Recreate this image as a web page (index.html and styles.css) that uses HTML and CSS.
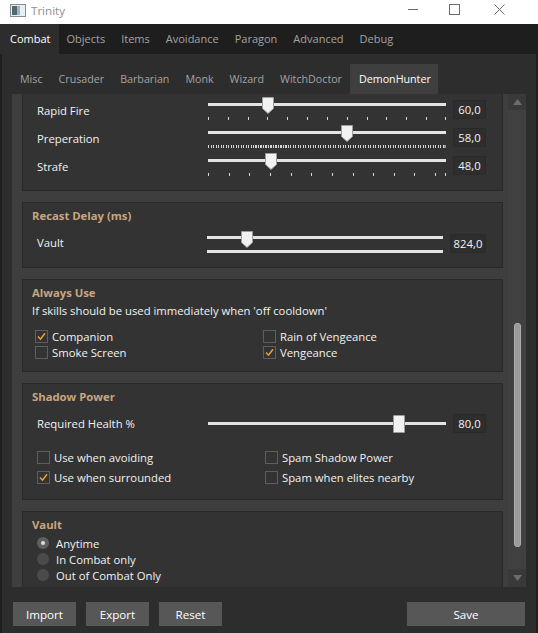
FILE: index.html
```html
<!DOCTYPE html>
<html>
<head>
<meta charset="utf-8">
<title>Trinity</title>
<link rel="stylesheet" href="styles.css">
</head>
<body>
<div class="window">
  <header class="titlebar">
    <svg class="app-icon" width="16" height="13" viewBox="0 0 16 13">
      <rect x="0.5" y="0.5" width="15" height="12" fill="#e9eef3" stroke="#8c8c8c"/>
      <rect x="2" y="2" width="5" height="9" fill="#4e6a70"/>
      <rect x="7" y="2" width="3" height="9" fill="#9fb3c1"/>
    </svg>
    <span class="title">Trinity</span>
    <svg class="cap cap-min" width="10" height="10" viewBox="0 0 10 10"><path d="M0 5.5H10" stroke="#6b6b6b" stroke-width="1"/></svg>
    <svg class="cap cap-max" width="11" height="11" viewBox="0 0 11 11"><rect x="0.5" y="0.5" width="10" height="10" fill="none" stroke="#6b6b6b"/></svg>
    <svg class="cap cap-close" width="11" height="11" viewBox="0 0 11 11"><path d="M0.5 0.5L10.5 10.5M10.5 0.5L0.5 10.5" stroke="#6b6b6b" stroke-width="1"/></svg>
  </header>

  <nav class="tabs-top">
    <span class="tab active">Combat</span>
    <span class="tab">Objects</span>
    <span class="tab">Items</span>
    <span class="tab">Avoidance</span>
    <span class="tab">Paragon</span>
    <span class="tab">Advanced</span>
    <span class="tab">Debug</span>
  </nav>

  <div class="body">
    <nav class="tabs-sub">
      <span class="tab">Misc</span>
      <span class="tab">Crusader</span>
      <span class="tab">Barbarian</span>
      <span class="tab">Monk</span>
      <span class="tab">Wizard</span>
      <span class="tab">WitchDoctor</span>
      <span class="tab active">DemonHunter</span>
    </nav>

    <div class="main">
      <div class="viewport">
        <section class="group cut">
          <div class="srows">
            <div class="srow">
              <span class="lbl">Rapid Fire</span>
              <div class="slider">
                <div class="track"></div>
                <div class="ticks ticks-20"></div>
                <svg class="thumb" style="left:54px" width="12" height="17" viewBox="0 0 12 17"><path d="M0.5 0.5H11.5V11.5L6 16.5L0.5 11.5Z" fill="#f2f2f2" stroke="#9c9c9c"/></svg>
              </div>
              <span class="val">60,0</span>
            </div>
            <div class="srow">
              <span class="lbl">Preperation</span>
              <div class="slider">
                <div class="track"></div>
                <div class="ticks ticks-dense"></div>
                <svg class="thumb" style="left:133px" width="12" height="17" viewBox="0 0 12 17"><path d="M0.5 0.5H11.5V11.5L6 16.5L0.5 11.5Z" fill="#f2f2f2" stroke="#9c9c9c"/></svg>
              </div>
              <span class="val">58,0</span>
            </div>
            <div class="srow">
              <span class="lbl">Strafe</span>
              <div class="slider">
                <div class="track"></div>
                <div class="ticks ticks-21"></div>
                <svg class="thumb" style="left:57px" width="12" height="17" viewBox="0 0 12 17"><path d="M0.5 0.5H11.5V11.5L6 16.5L0.5 11.5Z" fill="#f2f2f2" stroke="#9c9c9c"/></svg>
              </div>
              <span class="val">48,0</span>
            </div>
          </div>
        </section>

        <section class="group">
          <h3 class="gtitle">Recast Delay (ms)</h3>
          <div class="srow srow-wide">
            <span class="lbl">Vault</span>
            <div class="slider slider-recast">
              <div class="track"></div>
              <div class="ticks ticks-solid"></div>
              <svg class="thumb" style="left:34px" width="12" height="17" viewBox="0 0 12 17"><path d="M0.5 0.5H11.5V11.5L6 16.5L0.5 11.5Z" fill="#f2f2f2" stroke="#9c9c9c"/></svg>
            </div>
            <span class="val">824,0</span>
          </div>
        </section>

        <section class="group group-always">
          <h3 class="gtitle">Always Use</h3>
          <p class="desc">If skills should be used immediately when &#39;off cooldown&#39;</p>
          <div class="checks checks-tight">
            <label class="chk"><span class="box"><svg viewBox="0 0 11 11" width="11" height="11"><path d="M2 5.5L4.5 8.2L9 2.2" fill="none" stroke="#e7a33d" stroke-width="1.5"/></svg></span>Companion</label>
            <label class="chk"><span class="box"></span>Rain of Vengeance</label>
            <label class="chk"><span class="box"></span>Smoke Screen</label>
            <label class="chk"><span class="box"><svg viewBox="0 0 11 11" width="11" height="11"><path d="M2 5.5L4.5 8.2L9 2.2" fill="none" stroke="#e7a33d" stroke-width="1.5"/></svg></span>Vengeance</label>
          </div>
        </section>

        <section class="group">
          <h3 class="gtitle">Shadow Power</h3>
          <div class="srow srow-plain">
            <span class="lbl">Required Health %</span>
            <div class="slider slider-plain">
              <div class="track"></div>
              <div class="thumb-rect" style="left:185px"></div>
            </div>
            <span class="val">80,0</span>
          </div>
          <div class="checks">
            <label class="chk"><span class="box"></span>Use when avoiding</label>
            <label class="chk"><span class="box"></span>Spam Shadow Power</label>
            <label class="chk"><span class="box"><svg viewBox="0 0 11 11" width="11" height="11"><path d="M2 5.5L4.5 8.2L9 2.2" fill="none" stroke="#e7a33d" stroke-width="1.5"/></svg></span>Use when surrounded</label>
            <label class="chk"><span class="box"></span>Spam when elites nearby</label>
          </div>
        </section>

        <section class="group">
          <h3 class="gtitle">Vault</h3>
          <div class="radios">
            <label class="rad"><span class="dot on"></span>Anytime</label>
            <label class="rad"><span class="dot"></span>In Combat only</label>
            <label class="rad"><span class="dot"></span>Out of Combat Only</label>
          </div>
        </section>
      </div>

      <div class="scrollbar">
        <div class="sb-btn up"><svg width="9" height="6" viewBox="0 0 9 6"><path d="M0 6L4.5 0L9 6Z" fill="#6c6c6c"/></svg></div>
        <div class="sb-track"><div class="sb-thumb"></div></div>
        <div class="sb-btn down"><svg width="9" height="6" viewBox="0 0 9 6"><path d="M0 0L4.5 6L9 0Z" fill="#6c6c6c"/></svg></div>
      </div>
    </div>

    <footer class="bottombar">
      <button class="btn">Import</button>
      <button class="btn">Export</button>
      <button class="btn">Reset</button>
      <button class="btn save">Save</button>
    </footer>
  </div>
</div>
</body>
</html>
```

FILE: styles.css
```css
* { box-sizing: border-box; margin: 0; padding: 0; }
html, body { width: 538px; height: 633px; overflow: hidden; }
body {
  background: #2d2d2d;
  font-family: "Open Sans", "Noto Sans", sans-serif;
  font-size: 11.3px;
  color: #f2f2f2;
}

/* title bar */
.titlebar {
  height: 24px;
  background: #ffffff;
  display: flex;
  align-items: center;
}
.app-icon { margin-left: 10px; margin-top: -3px; }
.title { margin-left: 5px; color: #8f8f8f; font-size: 11.6px; margin-top: -4px; }
.cap { display: block; margin-top: -6px; }
.cap-min { margin-left: auto; }
.cap-max { margin-left: 31px; }
.cap-close { margin-left: 34px; margin-right: 33px; }

/* top tabs */
.tabs-top {
  height: 30px;
  background: #1e1e1e;
  display: flex;
}
.tabs-top .tab {
  line-height: 30px;
  padding: 0 8px;
  font-size: 11px;
  color: #a3a3a3;
}
.tabs-top .tab.active {
  background: #2d2d2d;
  color: #ffffff;
  padding: 0 8px 0 10px;
}

.body {
  border-left: 2px solid #1f1f1f;
  border-right: 2px solid #1f1f1f;
}

/* sub tabs */
.tabs-sub {
  height: 40px;
  padding: 10px 0 0 10px;
  display: flex;
}
.tabs-sub .tab {
  line-height: 30px;
  padding: 0 8px;
  font-size: 10.7px;
  color: #a3a3a3;
}
.tabs-sub .tab.active {
  background: #3f3f3f;
  color: #ffffff;
  padding: 0 7px 0 9px;
}

/* main area */
.main {
  display: flex;
  height: 493px;
  padding: 0 10px;
}
.viewport {
  flex: 1;
  background: #3e3e3e;
  overflow: hidden;
  padding: 0 5px 0 10px;
}

.group {
  background: #333333;
  border: 1px solid #282828;
  margin-bottom: 11px;
  padding: 5px 16px 12px 9px;
}
.group.cut {
  border-top: none;
  padding-top: 3px;
  padding-bottom: 13px;
}
.group.cut .lbl { margin-top: 3px; }
.group-always { padding-bottom: 11px; }
.gtitle {
  color: #c9a57f;
  font-weight: bold;
  font-size: 11.3px;
  line-height: 16px;
}
.desc {
  line-height: 16px;
  margin-top: 2px;
}

/* slider rows */
.srows { display: flex; flex-direction: column; gap: 4px; }
.srow {
  display: grid;
  grid-template-columns: 171px 238px 40px;
  align-items: center;
  padding-left: 5px;
}
.srow-wide {
  grid-template-columns: 170px 236px 43px;
  margin-top: 7px;
}
.srow-plain { margin-top: 9px; }
.lbl { line-height: 16px; }
.val {
  margin-left: 7px;
  height: 19px;
  background: #2e2e2e;
  border: 1px solid #2a2a2a;
  line-height: 17px;
  text-align: center;
}

.slider { position: relative; height: 24px; }
.track {
  position: absolute;
  left: 0; right: 0;
  top: 6px;
  height: 3px;
  background: #e3e3e3;
}
.ticks {
  position: absolute;
  left: 0; right: 0;
  top: 20px;
  height: 3px;
}
.ticks-20 {
  background:
    linear-gradient(#d6d6d6, #d6d6d6) right top / 1px 100% no-repeat,
    repeating-linear-gradient(90deg, #d6d6d6 0 1px, transparent 1px 19.83px);
}
.ticks-21 {
  background:
    linear-gradient(#d6d6d6, #d6d6d6) right top / 1px 100% no-repeat,
    repeating-linear-gradient(90deg, #d6d6d6 0 1px, transparent 1px 20.65px);
}
.ticks-dense {
  background:
    linear-gradient(#9a9a9a, #9a9a9a) right top / 2px 100% no-repeat,
    repeating-linear-gradient(90deg, #d6d6d6 0 1px, transparent 1px 2.5px);
}
.slider-recast .track { top: 5px; }
.ticks-solid {
  top: 19px;
  background: #e3e3e3;
}
.thumb { position: absolute; top: 0; display: block; }

.slider-plain { height: 18px; }
.slider-plain .track { top: 7px; }
.thumb-rect {
  position: absolute;
  top: 0;
  width: 12px;
  height: 18px;
  background: #f2f2f2;
  border: 1px solid #9c9c9c;
  border-radius: 1px;
}

/* checkboxes */
.checks {
  display: grid;
  grid-template-columns: 228px 1fr;
  padding-left: 5px;
  margin-top: 14px;
}
.checks-tight { padding-left: 3px; margin-top: 9px; }
.chk {
  display: flex;
  align-items: center;
  gap: 4px;
  height: 20px;
}
.checks-tight .chk { height: 16px; }
.box {
  width: 13px;
  height: 13px;
  border: 1px solid #5e5e5e;
  background: #333333;
  display: flex;
  align-items: center;
  justify-content: center;
}
.box svg { display: block; }

/* radios */
.radios { padding-left: 5px; margin-top: 2px; }
.rad {
  display: flex;
  align-items: center;
  gap: 7px;
  height: 16px;
}
.dot {
  width: 12px;
  height: 12px;
  border-radius: 50%;
  background: #4b4b4b;
  display: flex;
  align-items: center;
  justify-content: center;
}
.dot.on { background: #606060; }
.dot.on::after {
  content: "";
  width: 4px;
  height: 4px;
  border-radius: 50%;
  background: #dedede;
}

/* scrollbar */
.scrollbar {
  width: 18px;
  background: #414141;
  display: flex;
  flex-direction: column;
}
.sb-btn {
  height: 16px;
  background: #393939;
  display: flex;
  align-items: center;
  justify-content: center;
}
.sb-btn.down { height: 18px; }
.sb-track { flex: 1; }
.sb-thumb {
  margin: 213px auto 0;
  width: 7px;
  height: 224px;
  background: #9b9b9b;
  border: 1px solid #adadad;
  border-radius: 3px;
}

/* bottom bar */
.bottombar {
  height: 46px;
  display: flex;
  align-items: flex-start;
  padding: 15px 11px 0 11px;
}
.btn {
  height: 24px;
  width: 63px;
  margin-right: 10px;
  border: none;
  background: #575757;
  color: #ffffff;
  font-family: "Open Sans", "Noto Sans", sans-serif;
  font-size: 11.6px;
}
.btn.save { margin-left: auto; margin-right: 0; width: 118px; }
```
